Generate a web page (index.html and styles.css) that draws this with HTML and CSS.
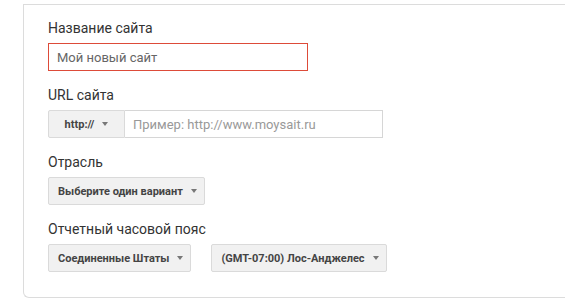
FILE: index.html
```html
<!DOCTYPE html>
<html lang="ru">
<head>
<meta charset="utf-8">
<link rel="stylesheet" href="styles.css">
</head>
<body>
<div class="card">
  <div class="field">
    <div class="label">Название сайта</div>
    <div class="input input-error"><span class="value">Мой новый сайт</span></div>
  </div>
  <div class="field">
    <div class="label">URL сайта</div>
    <div class="url-row">
      <div class="btn btn-proto">http://<span class="arrow"></span></div>
      <div class="input input-url"><span class="placeholder">Пример: http://www.moysait.ru</span></div>
    </div>
  </div>
  <div class="field">
    <div class="label">Отрасль</div>
    <div class="row">
      <div class="btn">Выберите один вариант<span class="arrow"></span></div>
    </div>
  </div>
  <div class="field">
    <div class="label">Отчетный часовой пояс</div>
    <div class="row gap">
      <div class="btn">Соединенные Штаты<span class="arrow"></span></div>
      <div class="btn btn-tz">(GMT-07:00) Лос-Анджелес<span class="arrow"></span></div>
    </div>
  </div>
</div>
</body>
</html>
```
FILE: styles.css
```css
html, body {
  margin: 0;
  padding: 0;
  background: #fff;
  overflow: hidden;
}
body {
  font-family: Roboto, "Liberation Sans", Arial, sans-serif;
}
.card {
  margin: 4px 0 0 23px;
  height: 294px;
  box-sizing: border-box;
  border: 1px solid #dcdcdc;
  border-right: none;
  border-radius: 0 0 0 6px;
  padding: 13px 24px 0 24px;
  display: flex;
  flex-direction: column;
  gap: 14px;
}
.field {
  display: flex;
  flex-direction: column;
  gap: 5px;
}
.label {
  font-size: 14px;
  line-height: 20px;
  color: #333;
}
.input {
  height: 28px;
  box-sizing: border-box;
  border: 1px solid #d6d6d6;
  background: #fff;
  display: flex;
  align-items: center;
  padding: 0 8px;
  font-size: 13px;
}
.input-error {
  width: 260px;
  border-color: #dd4b39;
}
.value {
  color: #666;
}
.placeholder {
  color: #999;
}
.url-row {
  display: flex;
}
.input-url {
  width: 258px;
  border-left: none;
}
.row {
  display: flex;
}
.row.gap {
  gap: 20px;
}
.btn {
  height: 28px;
  box-sizing: border-box;
  border: 1px solid #dadada;
  border-radius: 2px;
  background: #f1f1f1;
  display: flex;
  align-items: center;
  padding: 0 7px 0 9px;
  font-size: 11px;
  font-weight: bold;
  color: #444;
  white-space: nowrap;
}
.btn-proto {
  width: 77px;
  justify-content: center;
  padding: 0;
  border-radius: 2px 0 0 2px;
}
.arrow {
  display: inline-block;
  width: 0;
  height: 0;
  border-left: 3.5px solid transparent;
  border-right: 3.5px solid transparent;
  border-top: 4px solid #777;
  margin-left: 8px;
}
```
